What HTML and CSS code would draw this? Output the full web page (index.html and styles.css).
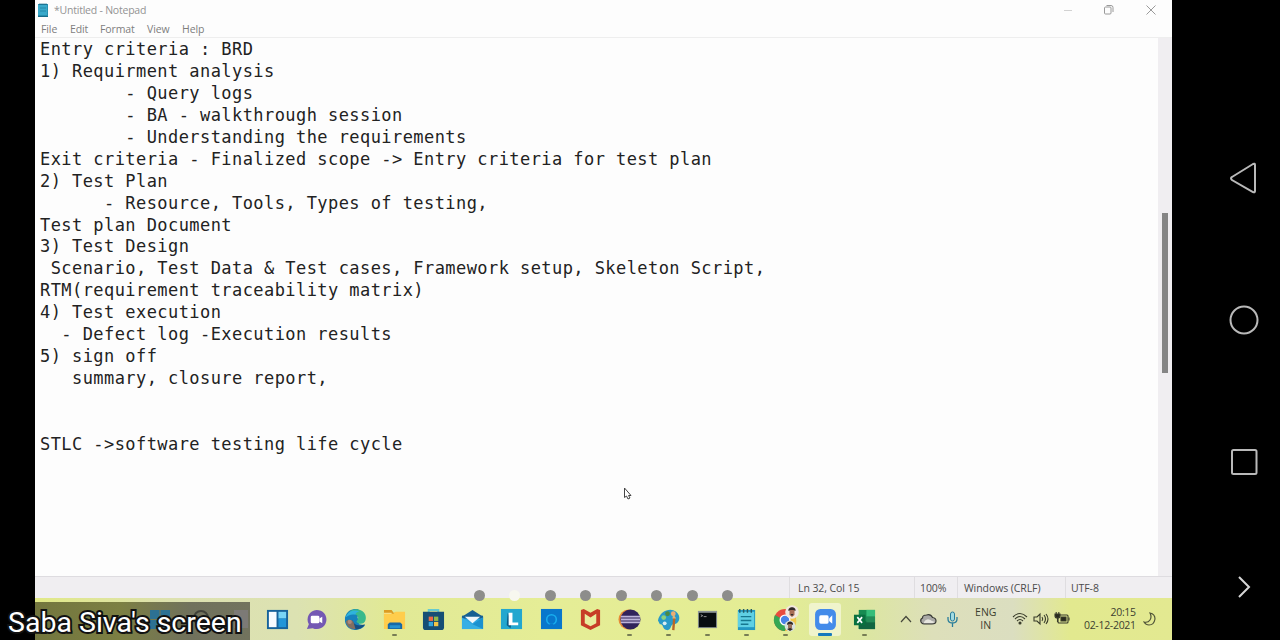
FILE: index.html
```html
<!DOCTYPE html>
<html lang="en">
<head>
<meta charset="utf-8">
<title>Untitled - Notepad</title>
<link rel="stylesheet" href="styles.css">
</head>
<body>
<div class="phone">
  <main class="screen">
    <header class="titlebar">
      <svg class="app-icon" viewBox="0 0 12 15"><path fill="#278fae" d="M1 1h10v13H1z"/><path fill="#39a9ca" d="M1 2h9v10H1z"/><path stroke="#176b89" stroke-width="1" d="M2 1.2h8M1 13.5h10"/><path stroke="#2588a8" stroke-width="1" d="M3 5h6M3 8h6"/></svg>
      <span class="title">*Untitled - Notepad</span>
      <svg class="window-controls" viewBox="0 0 100 20" fill="none" stroke="#9a9a9a"><path stroke="#d2d2d2" d="M4 10.5h8"/><rect x="44.5" y="7" width="6.5" height="7" rx="1"/><path d="M46.5 5.5h4.500q2 0 2 2v4.500M86.500 5.500l9 9M95.500 5.500l-9 9"/></svg>
    </header>
    <nav class="menu"><span class="m-file">File</span><span class="m-edit">Edit</span><span class="m-format">Format</span><span class="m-view">View</span><span>Help</span></nav>
    <section class="editor">
<pre class="document">Entry criteria : BRD
1) Requirment analysis
        - Query logs
        - BA - walkthrough session
        - Understanding the requirements
Exit criteria - Finalized scope -&gt; Entry criteria for test plan
2) Test Plan
      - Resource, Tools, Types of testing,
Test plan Document
3) Test Design
 Scenario, Test Data &amp; Test cases, Framework setup, Skeleton Script,
RTM(requirement traceability matrix)
4) Test execution
  - Defect log -Execution results
5) sign off
   summary, closure report,


STLC -&gt;software testing life cycle</pre>
      <div class="scrollbar"><div class="thumb"></div></div>
    </section>
    <footer class="status"><span></span><span class="s-line">Ln 32, Col 15</span><span class="s-zoom">100%</span><span class="s-eol">Windows (CRLF)</span><span class="s-enc">UTF-8</span></footer>
    <div class="taskbar">
      <div class="apps">
        <div class="app"><svg viewBox="0 0 24 24"><path fill="#17639b" d="M1 2h22v20H1z"/><path fill="#f8fcff" d="M3 4h8v16H3z"/><path fill="#79d5f5" d="M13 4h8v7h-8z"/><path fill="#2196d8" d="M13 11h8v9h-8z"/></svg></div>
        <div class="app"><svg viewBox="0 0 24 24"><path fill="#7458b3" d="M12 2a10 10 0 1 1-4 19l-6 1 2-5A10 10 0 0 1 12 2z"/><rect x="6" y="8" width="9" height="8" rx="1.500" fill="#fff"/><path fill="#fff" d="m15 11 3-2v7l-3-2z"/></svg></div>
        <div class="app"><svg viewBox="0 0 24 24"><path fill="#1682bd" d="M1 10C3 2 9 .5 14 1l6 4-6 4 2 8 6 1C17 25 3 25 1 14z"/><path fill="#39b98c" d="M4 6C8 0 17 0 21 5c3 4 2 9-1 11-3 1-6 0-7-2 4-4 1-8-4-8z"/><path fill="#2fb3dd" d="M1.500 10C4 3 11 1 16 4c-3 0-4 2-4 3-5-1-8 1-10.500 3z"/><path fill="#174f80" d="M9 12c0 5 6 8 13 5-3 5-9 7-14 4z"/><path fill="#816f61" d="M2 14c2-3 7-2 8 1l2 7c-5 0-9-2-10-8z"/><circle cx="6" cy="14.500" r="2.200" fill="#ad897b"/></svg></div>
        <div class="app running"><svg viewBox="0 0 24 24"><path fill="#dc9c22" d="M1 2h8l2 3h11v8H1z"/><path fill="#ffcd4c" d="M1 6h10l2-2h10v18H1z"/><path fill="#fff0a0" d="M1 5h8v1H1z"/><path fill="#1769a6" d="M5 22v-5l2-2h11l2 2v5z"/><path fill="#2892cf" d="M7 18h11v3H7z"/></svg></div>
        <div class="app"><svg viewBox="0 0 24 24"><path fill="none" stroke="#66cbd0" stroke-width="2" d="M7 5V2h10v3"/><path fill="#164e75" d="M1 4h22v16q0 3-3 3H4q-3 0-3-3z"/><path fill="#ed6845" d="M7 9h4.500v4.500H7z"/><path fill="#91b949" d="M12.500 9H17v4.500h-4.500z"/><path fill="#36a6dc" d="M7 14.500h4.500V19H7z"/><path fill="#f3c545" d="M12.500 14.500H17V19h-4.500z"/></svg></div>
        <div class="app"><svg viewBox="0 0 24 24"><path fill="#176092" d="m1 9 11-7 11 7v3H1z"/><path fill="#2da4df" d="M1 9h22v13H1z"/><path fill="#176092" d="M1 8h22v3H1z"/><path fill="#f1f7fa" d="M4 9h16l-8 7z"/><path fill="#36afe4" d="m1 10 11 7 11-7v12H1z"/><path fill="#1a91cf" d="m12 17 11 5V10z"/></svg></div>
        <div class="app"><svg viewBox="0 0 24 24"><path fill="#23a7cf" d="M1 1h22v21H1z"/><path fill="#075b87" d="m8 5-1 13 4 3 1-6z"/><path fill="#fff" d="M9 5h4v10h6v3H9z"/></svg></div>
        <div class="app"><svg viewBox="0 0 24 24"><path fill="#0877cc" d="M1 1h22v21H1z"/><circle cx="12" cy="12" r="5" fill="none" stroke="#18aeee" stroke-width="1.600"/><path stroke="#0877cc" stroke-width="2" d="M10 17h4"/></svg></div>
        <div class="app"><svg viewBox="0 0 24 24"><path fill="#c73c27" d="m2 2 3-1 7 4 7-4 3 1v16l-10 5-10-5z"/><path fill="#e9ed9e" d="m6 6 6 4 6-4v10l-6 3-6-3z"/></svg></div>
        <div class="app running"><svg viewBox="0 0 24 24"><circle cx="11" cy="12" r="10.500" fill="#e78b37"/><circle cx="13" cy="12" r="10.500" fill="#31235b"/><path stroke="#bdb3da" stroke-width="2" d="M3 9h20M3 12h20M3 15h20"/></svg></div>
        <div class="app running"><svg viewBox="0 0 24 24"><path fill="#299ac8" d="M1 13C3 3 14-1 20 4c6 5 3 13-3 13-3 0-2 7-7 6C5 22 7 16 3 17z"/><circle cx="7" cy="10" r="2.500" fill="#8cd17c"/><circle cx="11" cy="6" r="2.500" fill="#4a8b45"/><circle cx="17" cy="6" r="2.500" fill="#eead73"/><circle cx="8" cy="16" r="2" fill="#d9edf2"/><path fill="none" stroke="#b96827" stroke-width="2.500" d="m18 10-1 13"/><path fill="#dfb477" d="m16 11 1-5 3 5z"/></svg></div>
        <div class="app running"><svg viewBox="0 0 24 24"><path fill="#8d9697" d="M2 3h20v18H2z"/><path fill="#080d10" d="M3 5h18v15H3z"/><path fill="none" stroke="#999" d="m5 7 2 1-2 1M8 9h3"/></svg></div>
        <div class="app running"><svg viewBox="0 0 24 24"><path fill="#2498c2" d="M3 2h18v21H3z"/><path fill="#5fd0e4" d="M3 4h17v16H3z"/><path fill="none" stroke="#245b65" stroke-width="1.500" d="M5 1v4M9 1v4M13 1v4M17 1v4"/><path stroke="#16778f" stroke-width="1.500" d="M6 9h11M6 13h11M6 17h8"/></svg></div>
        <div class="app running"><svg class="chrome" viewBox="0 0 28 28"><circle cx="13" cy="15" r="11" fill="#e84c3f"/><path fill="#35a754" d="M3 10A11 11 0 0 0 13 26l4-8z"/><path fill="#f2c84b" d="m13 26 6-15h4c4 8-2 15-10 15z"/><circle cx="13" cy="15" r="5.500" fill="#fff"/><circle cx="13" cy="15" r="4.200" fill="#4a83e8"/><circle cx="20" cy="7" r="6.800" fill="#f2e8df"/><path fill="#a86d55" d="M17.500 4h5v6l-2.500 2-2.500-2z"/><path fill="#302a29" d="M16.500 6c-1-5 8-5 7 0l-2-1h-3zM18.500 9h3L20 11z"/><circle cx="18" cy="21" r="5.400" fill="#d9e2df"/><path fill="#9b7460" d="M16 19h4v4l-2 2-2-2z"/><path fill="#302a29" d="M15 20c0-5 7-4 6 0l-2-1h-2zM15 24l3-1 3 1-3 2z"/></svg></div>
        <div class="app running active"><svg viewBox="0 0 24 24"><rect x="2" y="2" width="20" height="20" rx="5" fill="#438bea"/><rect x="6" y="8" width="9" height="8" rx="1.500" fill="#fff"/><path fill="#fff" d="m15.500 11 3-3v8l-3-2.500z"/></svg></div>
        <div class="app running"><svg viewBox="0 0 24 24"><path fill="#168b51" d="M6 2h17v20H6z"/><path fill="#35bd79" d="M14 2h9v7h-9z"/><path fill="#116641" d="M6 14h17v8H6z"/><path fill="#238c57" d="M14 9h9v6h-9z"/><path fill="#08703f" d="M1 7h12v11H1z"/><path stroke="#fff" stroke-width="1.700" d="m4.500 9.500 5 6M9.500 9.500l-5 6"/></svg></div>
      </div>
      <svg class="tray-left" viewBox="0 0 60 24"><path fill="none" stroke="#45473b" stroke-width="1.200" d="m1 15 5-5.500 5 5.500"/><path fill="#aaa9a6" stroke="#393a36" stroke-width="1.200" d="M24 17h8q4 0 4-3t-3.500-3.500q-2-4-6-2.500-4 0-4 3-2.500 1-1.500 4 1 2 3 2z"/><path fill="#e7e6df" d="M24 15q3-5 8-1l3 1-2 1h-9z"/><rect x="50.500" y="5" width="4" height="9" rx="2" fill="#a2dbe2" stroke="#287d9a"/><path fill="none" stroke="#287d9a" stroke-width="1.300" d="M48 10v2q0 4 4.500 4t4.500-4v-2M52.500 16v4"/></svg>
      <div class="language">ENG<br>IN</div>
      <svg class="tray-right" viewBox="0 0 62 24" fill="none" stroke="#383b2a" stroke-width="1.100"><path d="M3 10q7-7 14 0M5 12q5-5 10 0M7 14q3-3 6 0"/><circle cx="10" cy="16" r="1" fill="#383b2a"/><path d="M24 10h3l3-3v10l-3-3h-3zM32 10q1.500 2 0 4M34 8q3 4 0 8M36 7q4 5 0 10"/><rect x="48" y="8" width="10" height="8" rx="1"/><path fill="#292b1d" d="M51 10h5v4h-5z"/><path d="M45 7h5v2q0 2-2.500 2T45 9zM46.200 5v2M48.800 5v2M47.500 11v4M59 10.500v3" fill="#292b1d"/></svg>
      <div class="clock">20:15<br>02-12-2021</div>
      <svg class="moon" viewBox="0 0 14 16"><path fill="none" stroke="#505438" stroke-width="1.200" d="M7 2q5 1 5 6-1 6-6 6-3 0-5-3 4 1 6-2 2-3 0-7z"/></svg>
    </div>
  </main>
  <aside class="navigation">
    <svg viewBox="0 0 30 36"><path d="M26 5v26q0 2-2 1L3 20q-2-2 0-3L24 4q2-1 2 1z"/></svg>
    <svg viewBox="0 0 36 36"><circle cx="18" cy="18" r="13.500"/></svg>
    <svg viewBox="0 0 30 36"><rect x="3" y="6" width="24.500" height="24" rx="1.500"/></svg>
    <svg class="next" viewBox="0 0 24 30"><path d="m7 5 10 10L7 25"/></svg>
  </aside>
  <div class="speaker">
    <svg class="dimmed-icons" viewBox="0 0 100 38"><path fill="#2d7193" d="M0 8h9.500v9H0zM10.500 8H20v9h-9.500zM0 18h9.500v9H0zM10.500 18H20v9h-9.500z"/><circle cx="51" cy="16" r="7" fill="none" stroke="#404139" stroke-width="2"/><path fill="#7c7a76" d="M84 8h14v18H84z"/></svg>
    <span>Saba Siva's screen</span>
  </div>
  <div class="pages"><i></i><i class="current"></i><i></i><i></i><i></i><i></i><i></i><i></i></div>
  <svg class="cursor" viewBox="0 0 10 13"><path fill="#fff" stroke="#444" d="M1.500 1v9.500l2-1.500L5 12l2-1-1.500-2.500H8z"/></svg>
</div>
</body>
</html>
```
FILE: styles.css
```css
* { box-sizing: border-box; }
body { margin: 0; background: #000; font-family: "Open Sans", "Noto Sans", sans-serif; }
.phone { position: relative; display: grid; grid-template-columns: 1137px 1fr; width: 1280px; height: 640px; padding-left: 35px; overflow: hidden; background: #000; }
.screen { display: grid; grid-template-rows: 20px 18px 538px 22px 42px; background: #fdfdfd; overflow: hidden; }
.titlebar { display: flex; align-items: center; padding-left: 2px; color: #939393; font-size: 10.5px; letter-spacing: -.22px; }
.app-icon { width: 12px; height: 15px; }
.title { margin-left: 5px; }
.window-controls { width: 100px; height: 20px; margin-left: auto; margin-right: 12px; }
.menu { display: flex; align-items: center; padding-left: 6px; border-bottom: 1px solid #eee; color: #7d7d7d; font-size: 10.5px; line-height: 18px; letter-spacing: -.1px; }
.m-file { width: 29px; }
.m-edit { width: 30px; }
.m-format { width: 47px; }
.m-view { width: 35px; }
.editor { display: flex; justify-content: space-between; }
.document { margin: 0; padding: 1px 0 0 5px; color: #222; font: 17px/21.94px "DejaVu Sans Mono", monospace; letter-spacing: .432px; }
.scrollbar { width: 14px; padding: 175px 4px 0 4px; background: #f0eef1; }
.thumb { width: 6px; height: 160px; background: #858585; }
.status { display: grid; grid-template-columns: 754px 125px 43px 108px 1fr; border-top: 1px solid #dedce0; background: #f0eef1; color: #4b4b4b; font-size: 10.5px; line-height: 22px; letter-spacing: -.08px; }
.status span + span { border-left: 1px solid #dfdde0; padding-left: 6px; }
.status .s-line { padding-left: 8px; }
.status .s-zoom { padding-left: 5px; }
.status .s-enc { padding-left: 5px; }
.taskbar { display: flex; align-items: center; padding-left: 222.5px; background: linear-gradient(90deg, #e1e987 0, #dde1b0 12%, #dce2b2 23%, #e1e996 31%, #e5ed96 45%, #e4ed94 65%, #dce6a1 73%, #dddfba 79%, #dbdec0 86%, #e2e98f 91%, #e3e991 100%); color: #3d3f2f; }
.apps { display: grid; grid-template-columns: repeat(16, 39.15px); }
.app { position: relative; display: grid; place-items: center; height: 42px; }
.app svg { width: 23px; height: 23px; }
.app .chrome { width: 28px; height: 28px; }
.running::after { content: ""; position: absolute; left: 17px; bottom: 4px; width: 5px; height: 2px; border-radius: 1px; background: #777d54; }
.active { z-index: 0; }
.active::before { content: ""; position: absolute; z-index: -1; inset: 5px 4px 4px; border-radius: 3px; background: #f0f4cc; }
.active::after { left: 13px; width: 14px; height: 3px; background: #1679bd; }
.app.active svg { width: 25px; height: 25px; }
.tray-left { width: 60px; height: 24px; margin-left: 16px; }
.language { width: 30px; margin-left: 11px; text-align: center; font-size: 10.5px; line-height: 13.500px; }
.tray-right { width: 62px; height: 24px; margin-left: 9px; }
.clock { width: 56px; margin-left: 8px; text-align: right; font-size: 10.5px; line-height: 13.500px; letter-spacing: -.3px; }
.moon { width: 14px; height: 16px; margin-left: 7px; }
.navigation { display: grid; grid-template-rows: 36px 36px 36px 30px; align-content: start; justify-items: center; padding: 160px 0 0 36px; row-gap: 106px; }
.navigation svg { width: 30px; height: 36px; fill: none; stroke: #b9b9b9; stroke-width: 2; }
.navigation svg:nth-child(2) { width: 36px; }
.navigation .next { width: 24px; height: 30px; margin-top: -14px; stroke: #d6d6d6; }
.speaker { position: absolute; left: 0; top: 602px; width: 250px; height: 38px; padding-left: 8px; background: linear-gradient(90deg, #000 35px, #73763e 35px, #7c7f43 120px, #70715c 190px, #72735e 250px); color: #fff; font: 28.5px/41px Roboto, sans-serif; white-space: nowrap; }
.speaker span { position: relative; paint-order: stroke fill; -webkit-text-stroke: 4px #111; }
.dimmed-icons { position: absolute; left: 150px; top: 0; width: 100px; height: 38px; }
.pages { position: absolute; left: 473.700px; top: 590px; display: flex; gap: 24.500px; }
.pages i { width: 11px; height: 11px; border-radius: 50%; background: #8d8d8b; }
.pages .current { background: #f7f7ef; }
.cursor { position: absolute; left: 623px; top: 487px; width: 10px; height: 13px; }
```
